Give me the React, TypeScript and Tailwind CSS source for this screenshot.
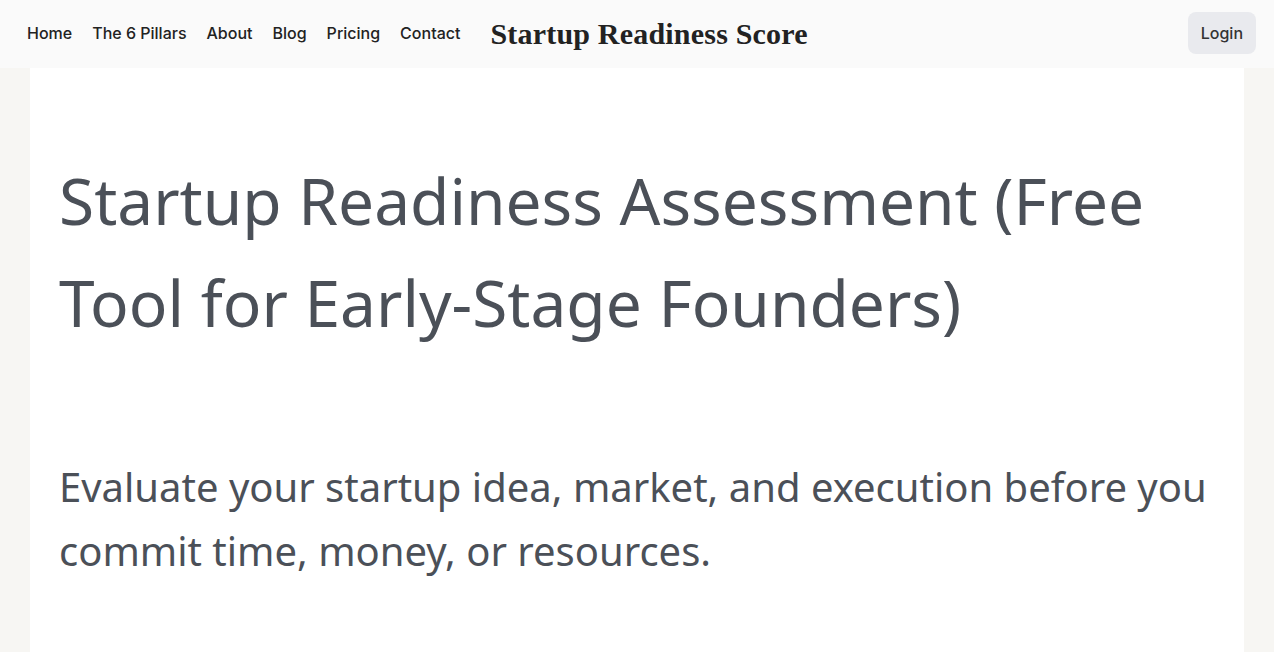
export default function App() {
  const links = ["Home", "The 6 Pillars", "About", "Blog", "Pricing", "Contact"];

  return (
    <div className="min-h-screen bg-[#f7f6f3]">
      {/* Header */}
      <header className="h-[68px] bg-[#fafafa] flex items-center justify-between pl-[27px] pr-[18px] pb-[2px]">
        <div className="flex items-center">
          <nav className="flex items-center gap-[20px] font-['Inter',sans-serif] text-[16px] font-medium text-[#222]">
            {links.map((l) => (
              <a key={l} href="#" className="whitespace-nowrap">
                {l}
              </a>
            ))}
          </nav>
          <div className="ml-[30px] font-['Liberation_Serif',serif] font-bold text-[30px] text-[#222] tracking-[0.2px]">
            Startup Readiness Score
          </div>
        </div>
        <button className="h-[42px] px-[13px] rounded-lg bg-[#e9eaee] font-['Inter',sans-serif] text-[16px] font-medium text-[#333]">
          Login
        </button>
      </header>

      {/* Content */}
      <main className="mx-[30px] bg-white pl-[29px] pr-[30px] pt-[82px] pb-[80px] font-['Noto_Sans','Open_Sans',sans-serif] text-[#4b5058]">
        <h1 className="text-[64px] leading-[1.6] font-normal">
          Startup Readiness Assessment (Free Tool for Early-Stage Founders)
        </h1>
        <p className="mt-[100px] text-[40px] leading-[1.6]">
          Evaluate your startup idea, market, and execution before you commit time, money, or resources.
        </p>
      </main>
    </div>
  );
}
